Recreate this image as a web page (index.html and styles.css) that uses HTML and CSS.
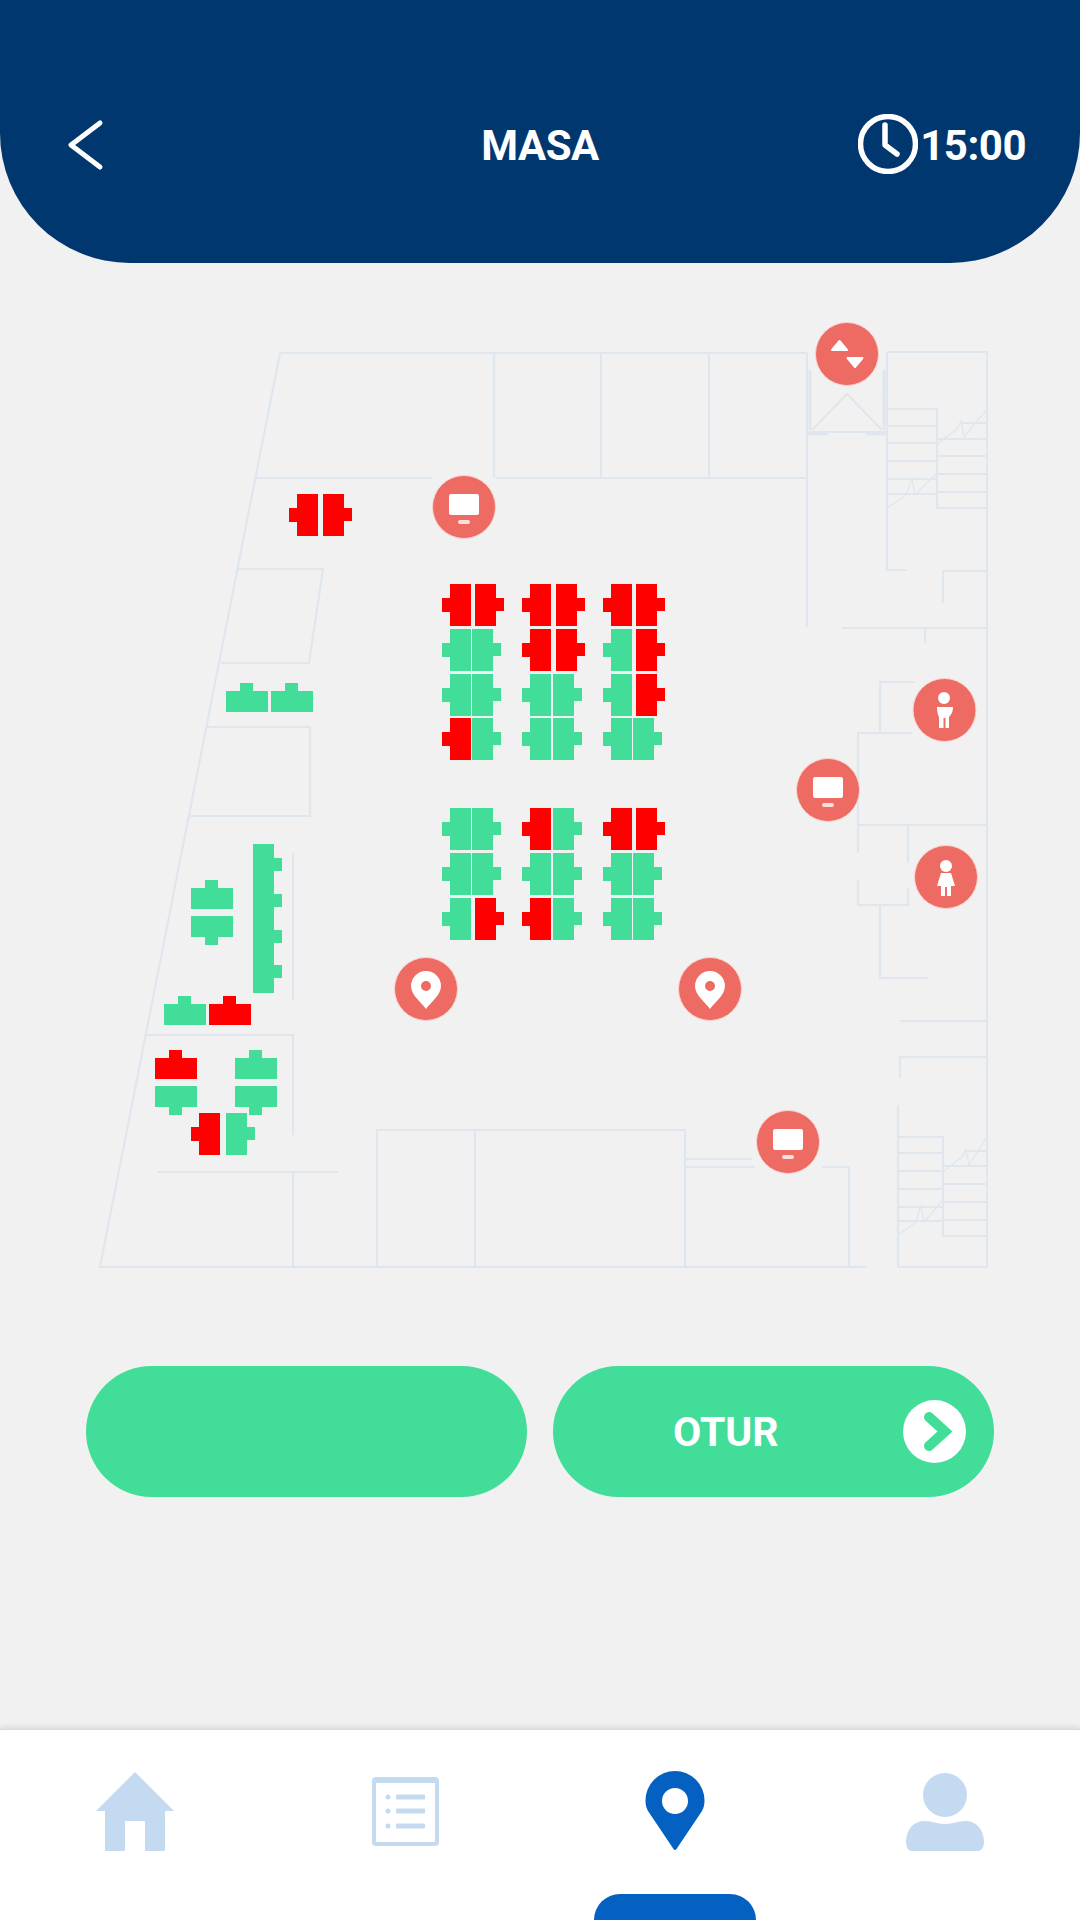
FILE: index.html
```html
<!DOCTYPE html>
<html lang="tr">
<head>
<meta charset="utf-8">
<title>Masa</title>
<link rel="stylesheet" href="styles.css">
</head>
<body>
<div class="page">
  <header class="topbar">
    <svg class="back" viewBox="0 0 40 54" aria-hidden="true"><path d="M33 5 4 27 33 49" class="back-line"/></svg>
    <h1 class="title">MASA</h1>
    <div class="timer">
      <svg class="clock" viewBox="0 0 60 60" aria-hidden="true"><circle cx="30" cy="30" r="27.5" class="clock-line"/><path d="M27 11v20l12 9" class="clock-line"/></svg>
      <span>15:00</span>
    </div>
  </header>

  <svg class="map" viewBox="0 263 1080 1060" aria-label="Kat planı">
    <defs>
      <path id="seat-l" d="M0 14h8V0h21v42H8V28H0z"/>
      <path id="seat-r" d="M0 0h21v14h8v13h-8v15H0z"/>
      <path id="seat-u" d="M14 0h13v8h15v21H0V8h14z"/>
      <path id="seat-d" d="M0 0h42v21H27v8H14v-8H0z"/>
      <g id="ico-screen">
        <rect class="ico" x="-15" y="-13" width="30" height="21" rx="2"/>
        <rect class="ico-soft" x="-6" y="13" width="12" height="4" rx="2"/>
      </g>
      <g id="ico-spot">
        <path class="ico" d="M0 20C-5 13-15 6-15-3A15 15 0 0 1 15-3C15 6 5 13 0 20z"/>
        <circle class="hole" cx="0" cy="-3" r="5"/>
      </g>
    </defs>

    <g class="plan">
      <path d="M280 353 100 1267H867M280 353H807M888 352H987V1267H898"/>
      <path d="M494 353V478M601 353V478M709 353V478M256 478H432M496 478H806"/>
      <path d="M238 569H323L309 663H221M207 727H310V816H189M293 853V1000M145 1035H293V1135M157 1172H338M293 1172V1267"/>
      <path d="M377 1267V1130H685V1267M475 1130V1267M685 1159H752M685 1167H755M822 1167H849V1267"/>
      <path d="M807 353V627M887 352V570H907M812 430 847 394 882 430M807 432H887"/>
      <path class="thick" d="M810 370V430M884 370V430M807 434H828M866 434H887"/>
      <path d="M887 409H937V508H987M887 426H937M887 443H937M887 461H937M887 479H937M887 494H937M960 423H987M937 439H987M937 456H987M937 474H987M937 492H987"/>
      <path class="thin" d="M887 508 906 495 912 478 915 495 937 473M937 444 957 429 961 421 964 437 987 409"/>
      <path d="M987 571H943V603M842 628H987M925 628V643"/>
      <path d="M915 682H880V733M912 733H858V853M858 825H987M908 825V863M908 888V905H858V880M880 905V978H928"/>
      <path d="M900 1021H987M987 1057H900V1078M898 1105V1267"/>
      <path d="M898 1137H943V1236H987M898 1153H943M898 1171H943M898 1189H943M898 1207H943M898 1221H943M965 1151H987M943 1166H987M943 1184H987M943 1202H987M943 1220H987"/>
      <path class="thin" d="M898 1235 916 1222 921 1205 924 1222 943 1200M943 1172 962 1157 966 1149 969 1165 987 1137"/>
    </g>

    <g class="seats">
      <use class="taken" href="#seat-l" x="289" y="494"/><use class="taken" href="#seat-r" x="323" y="494"/>

      <use class="free" href="#seat-u" x="226" y="683"/><use class="free" href="#seat-u" x="271" y="683"/>
      <use class="free" href="#seat-u" x="191" y="880"/><use class="free" href="#seat-d" x="191" y="916"/>
      <use class="free" href="#seat-u" x="164" y="996"/><use class="taken" href="#seat-u" x="209" y="996"/>
      <use class="taken" href="#seat-u" x="155" y="1050"/><use class="free" href="#seat-d" x="155" y="1086"/>
      <use class="free" href="#seat-u" x="235" y="1050"/><use class="free" href="#seat-d" x="235" y="1086"/>
      <use class="taken" href="#seat-l" x="191" y="1113"/><use class="free" href="#seat-r" x="226" y="1113"/>
      <path class="free" d="M253 844h21v14h8v13h-8v23h8v13h-8v23h8v13h-8v22h8v13h-8v15h-21z"/>

      <use class="taken" href="#seat-l" x="442" y="584"/><use class="taken" href="#seat-r" x="475" y="584"/>
      <use class="taken" href="#seat-l" x="522" y="584"/><use class="taken" href="#seat-r" x="556" y="584"/>
      <use class="taken" href="#seat-l" x="603" y="584"/><use class="taken" href="#seat-r" x="636" y="584"/>

      <use class="free" href="#seat-l" x="442" y="629"/><use class="free" href="#seat-r" x="472" y="629"/>
      <use class="taken" href="#seat-l" x="522" y="629"/><use class="taken" href="#seat-r" x="556" y="629"/>
      <use class="free" href="#seat-l" x="603" y="629"/><use class="taken" href="#seat-r" x="636" y="629"/>

      <use class="free" href="#seat-l" x="442" y="674"/><use class="free" href="#seat-r" x="472" y="674"/>
      <use class="free" href="#seat-l" x="522" y="674"/><use class="free" href="#seat-r" x="553" y="674"/>
      <use class="free" href="#seat-l" x="603" y="674"/><use class="taken" href="#seat-r" x="636" y="674"/>

      <use class="taken" href="#seat-l" x="442" y="718"/><use class="free" href="#seat-r" x="472" y="718"/>
      <use class="free" href="#seat-l" x="522" y="718"/><use class="free" href="#seat-r" x="553" y="718"/>
      <use class="free" href="#seat-l" x="603" y="718"/><use class="free" href="#seat-r" x="633" y="718"/>

      <use class="free" href="#seat-l" x="442" y="808"/><use class="free" href="#seat-r" x="472" y="808"/>
      <use class="taken" href="#seat-l" x="522" y="808"/><use class="free" href="#seat-r" x="553" y="808"/>
      <use class="taken" href="#seat-l" x="603" y="808"/><use class="taken" href="#seat-r" x="636" y="808"/>

      <use class="free" href="#seat-l" x="442" y="853"/><use class="free" href="#seat-r" x="472" y="853"/>
      <use class="free" href="#seat-l" x="522" y="853"/><use class="free" href="#seat-r" x="553" y="853"/>
      <use class="free" href="#seat-l" x="603" y="853"/><use class="free" href="#seat-r" x="633" y="853"/>

      <use class="free" href="#seat-l" x="442" y="898"/><use class="taken" href="#seat-r" x="475" y="898"/>
      <use class="taken" href="#seat-l" x="522" y="898"/><use class="free" href="#seat-r" x="553" y="898"/>
      <use class="free" href="#seat-l" x="603" y="898"/><use class="free" href="#seat-r" x="633" y="898"/>
    </g>

    <g>
      <circle class="badge" cx="847" cy="354" r="31.5"/>
      <path class="ico tri" d="M839.5 341 832 350H847zM855 367 847.5 358H862.5z"/>

      <circle class="badge" cx="464" cy="507" r="31.5"/><use href="#ico-screen" x="464" y="507"/>
      <circle class="badge" cx="828" cy="790" r="31.5"/><use href="#ico-screen" x="828" y="790"/>
      <circle class="badge" cx="788" cy="1142" r="31.5"/><use href="#ico-screen" x="788" y="1142"/>

      <circle class="badge" cx="944.5" cy="710" r="31.5"/>
      <circle class="ico" cx="944" cy="698" r="6"/>
      <path class="ico" d="M937 707H953C953 712 951 715 949 717V728H945.5V718H943.5V728H939V717C938 715 937 712 937 707z"/>

      <circle class="badge" cx="946" cy="877" r="31.5"/>
      <circle class="ico" cx="946" cy="866" r="6"/>
      <path class="ico" d="M941 873H951L955 886H951V896H947V887H945V896H941V886H937z"/>

      <circle class="badge" cx="426" cy="989" r="31.5"/><use href="#ico-spot" x="426" y="989"/>
      <circle class="badge" cx="710" cy="989" r="31.5"/><use href="#ico-spot" x="710" y="989"/>
    </g>
  </svg>

  <div class="actions">
    <button class="action" type="button"></button>
    <button class="action" type="button">
      <span class="action-label">OTUR</span>
      <svg class="action-icon" viewBox="0 0 63 63" aria-hidden="true"><circle cx="31.5" cy="31.5" r="31.5" class="action-disc"/><path d="M26 17 42 31.5 26 46" class="action-arrow"/></svg>
    </button>
  </div>

  <nav class="tabs">
    <a class="tab">
      <svg class="tab-icon" viewBox="0 0 80 80" aria-hidden="true"><path d="M40 1 79 40H70V80H50V50H30V80H10V40H1z"/></svg>
    </a>
    <a class="tab">
      <svg class="tab-icon" viewBox="0 0 80 80" aria-hidden="true"><path fill-rule="evenodd" d="M11 6H70A4 4 0 0 1 74 10V71A4 4 0 0 1 70 75H11A4 4 0 0 1 7 71V10A4 4 0 0 1 11 6zM11 12V71H70V12z"/><circle cx="23" cy="26" r="2.5"/><circle cx="23" cy="40" r="2.5"/><circle cx="23" cy="55" r="2.5"/><rect x="31" y="23.5" width="29" height="5" rx="1"/><rect x="31" y="37.5" width="29" height="5" rx="1"/><rect x="31" y="52.5" width="29" height="5" rx="1"/></svg>
    </a>
    <a class="tab tab-active">
      <svg class="tab-icon" viewBox="0 0 80 80" aria-hidden="true"><path fill-rule="evenodd" d="M40 0A29.5 29.5 0 0 1 69.5 30C69.5 34 68.5 37 67 40L41.5 78Q40 80 38.5 78L13 40C11.5 37 10.5 34 10.5 30A29.5 29.5 0 0 1 40 0zM40 17A13 13 0 1 0 40 43 13 13 0 1 0 40 17z"/></svg>
      <span class="tab-mark"></span>
    </a>
    <a class="tab">
      <svg class="tab-icon" viewBox="0 0 80 80" aria-hidden="true"><circle cx="40" cy="24" r="22"/><path d="M1 70C2 58 8 50 20 50 28 50 31 53 40 53 49 53 52 50 60 50 72 50 78 58 79 70 79 76 77 80 73 80H7C3 80 1 76 1 70z"/></svg>
    </a>
  </nav>
</div>
</body>
</html>
```

FILE: styles.css
```css
* { box-sizing: border-box; }

html, body {
  margin: 0;
  padding: 0;
}

body {
  background: #f1f1f1;
  font-family: Roboto, "Liberation Sans", sans-serif;
}

.page {
  width: 1080px;
  height: 1920px;
  display: flex;
  flex-direction: column;
  overflow: hidden;
}

/* Header */
.topbar {
  height: 263px;
  flex: none;
  padding: 114px 54px 0;
  display: grid;
  grid-template-columns: minmax(0, 1fr) auto minmax(0, 1fr);
  align-items: start;
  background: #00376f;
  border-radius: 0 0 130px 130px;
  color: #fff;
}

.back {
  width: 40px;
  height: 54px;
  margin-top: 4px;
  margin-left: 13px;
}

.back-line {
  fill: none;
  stroke: #fff;
  stroke-width: 5;
  stroke-linecap: round;
  stroke-linejoin: round;
}

.title {
  margin: 8px 0 0;
  font-size: 42px;
  line-height: 48px;
  font-weight: 700;
  letter-spacing: -0.5px;
}

.timer {
  justify-self: end;
  display: flex;
  align-items: flex-start;
  gap: 2px;
  font-size: 42px;
  line-height: 48px;
  font-weight: 700;
  letter-spacing: -0.5px;
}

.timer span {
  margin-top: 8px;
}

.clock {
  width: 60px;
  height: 60px;
}

.clock-line {
  fill: none;
  stroke: #fff;
  stroke-width: 5.5;
  stroke-linecap: round;
  stroke-linejoin: round;
}

/* Floor plan */
.map {
  display: block;
  flex: none;
  width: 1080px;
  height: 1060px;
}

.plan {
  filter: blur(0.6px);
}

.plan path {
  fill: none;
  stroke: #e0e6ed;
  stroke-width: 2.2;
}

.plan .thin {
  stroke-width: 1.3;
}

.plan .thick {
  stroke-width: 3;
}

.free { fill: #41dd99; }
.taken { fill: #ff0000; }
.badge {
  fill: #ee6b64;
  stroke: #f9d3d0;
  stroke-width: 1;
}
.ico { fill: #fff; }
.ico-soft { fill: #fbdedb; }
.hole { fill: #ee6b64; }
.tri {
  stroke: #fff;
  stroke-width: 2;
  stroke-linejoin: round;
}

/* Action buttons */
.actions {
  flex: none;
  margin-top: 43px;
  padding: 0 86px;
  display: grid;
  grid-template-columns: 441px 441px;
  column-gap: 26px;
}

.action {
  height: 131px;
  padding: 0 28px 0 120px;
  border: 0;
  border-radius: 66px;
  display: flex;
  align-items: center;
  justify-content: space-between;
  background: #41dd99;
  color: #fff;
  font-family: inherit;
  font-size: 41px;
  font-weight: 700;
}

.action-icon {
  width: 63px;
  height: 63px;
}

.action-disc { fill: #fff; }

.action-arrow {
  fill: none;
  stroke: #41dd99;
  stroke-width: 10;
  stroke-linecap: round;
  stroke-linejoin: miter;
}

/* Bottom tabs */
.tabs {
  margin-top: auto;
  height: 191px;
  flex: none;
  padding-top: 41px;
  display: grid;
  grid-template-columns: repeat(4, 270px);
  align-items: start;
  background: #fff;
  border-top: 1px solid #dcdcdc;
  box-shadow: 0 -2px 6px rgba(0, 0, 0, 0.1);
}

.tab {
  display: flex;
  flex-direction: column;
  align-items: center;
}

.tab-icon {
  width: 80px;
  height: 80px;
  fill: #c4daf1;
}

.tab-active .tab-icon {
  fill: #0561c1;
}

.tab-mark {
  width: 162px;
  height: 26px;
  margin-top: 43px;
  background: #0561c1;
  border-radius: 34px 34px 0 0;
}
```
